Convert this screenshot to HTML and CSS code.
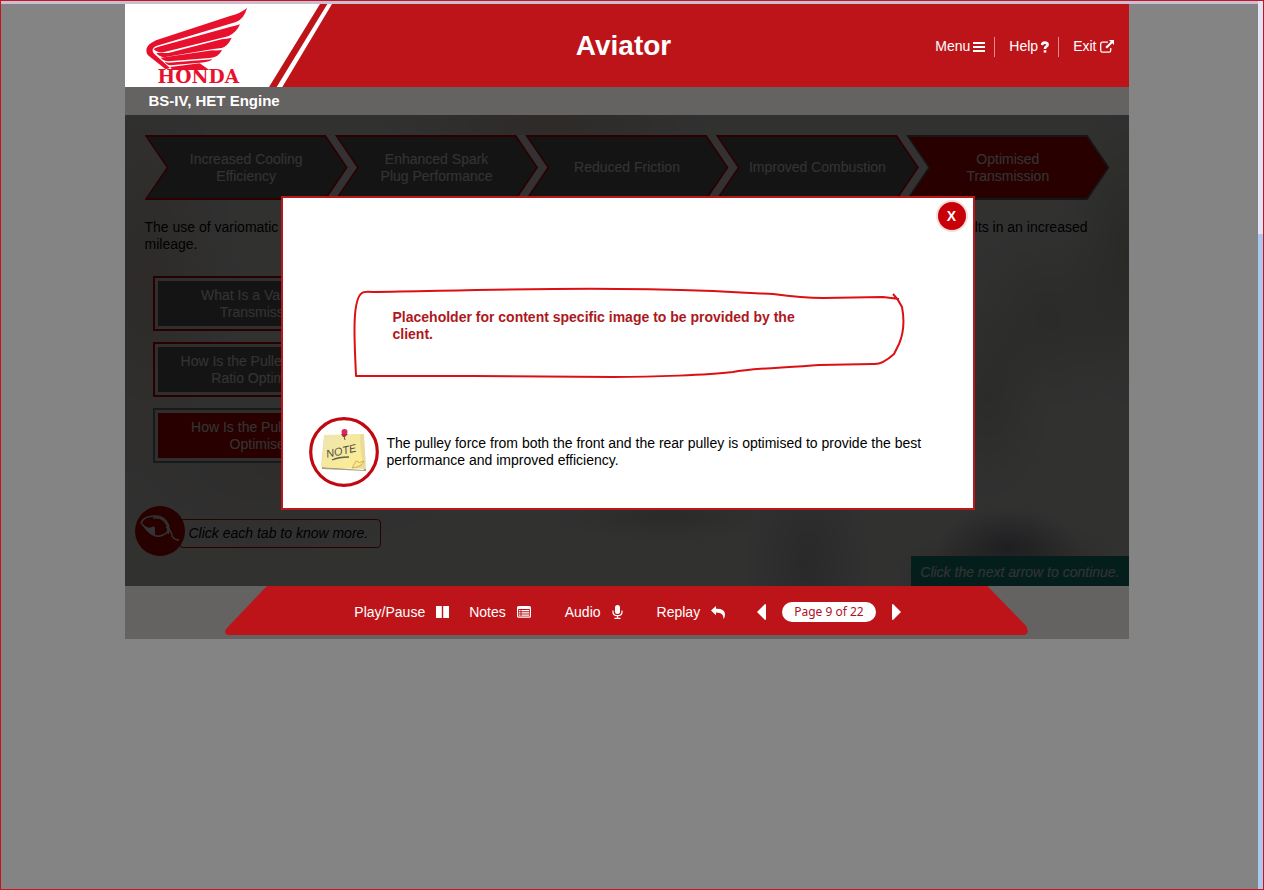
FILE: index.html
```html
<!DOCTYPE html>
<html lang="en">
<head>
<meta charset="utf-8">
<title>Aviator</title>
<link rel="stylesheet" href="styles.css">
</head>
<body>
<div class="frame">
  <main class="workspace">
    <div class="course">
      <header class="header">
        <a class="logo" href="#" aria-label="Honda home">
          <svg viewBox="15 12 630 249" width="210" height="83" aria-hidden="true">
            <path fill="#fff" d="M15 12H600L447 261H15ZM622 12H636L487 261H470Z"/>
            <g fill="#e8112d">
              <path d="M381 24Q372 57 348 66L111 137Q96 142 98 153Q99 158 104 163L150 204L137 208L84 166Q77 157 80 145Q84 132 108 121L330 48Q364 39 381 24Z"/>
              <path d="M360 73Q350 97 326 108Q316 112 306 113L130 157Q112 159 101 148Q107 142 124 138L332 80Q350 77 360 73Z"/>
              <path d="M335 113Q324 138 305 144L280 147L132 172Q118 170 109 159L145 159L305 118Q320 117 335 113Z"/>
              <path d="M306 150Q296 172 270 174L145 184Q130 183 122 173L277 151Q294 152 306 150Z"/>
              <path d="M278 178Q268 187 240 188L152 196Q139 194 134 185L145 188Z"/>
              <path d="M151 201L239 190L268 210H157Z"/>
            </g>
            <text class="wordmark" x="235" y="250" text-anchor="middle">HONDA</text>
          </svg>
        </a>
        <h1 class="title">Aviator</h1>
        <nav class="menu" aria-label="Course">
          <a href="#">Menu
            <svg viewBox="0 0 12 12" width="12" height="12" aria-hidden="true"><path fill="currentColor" d="M0 1h12v2H0zM0 5h12v2H0zM0 9h12v2H0z"/></svg></a>
          <a href="#">Help
            <svg viewBox="0 0 8 12" width="8" height="12" aria-hidden="true"><path fill="none" stroke="currentColor" stroke-width="2.6" d="M1 4Q1.300 1.600 3.800 1.600Q6.600 1.600 6.600 3.800Q6.600 5 5.200 5.700Q4 6.300 4 8"/><path fill="currentColor" d="M2.700 9.200h2.600v2.400H2.700z"/></svg></a>
          <a href="#">Exit
            <svg viewBox="0 0 14 13" width="14" height="13" aria-hidden="true"><path fill="none" stroke="currentColor" stroke-width="1.3" d="M8 2.200H2.400Q.7 2.200.7 4V10.500Q.7 12.200 2.400 12.200H9Q10.700 12.200 10.700 10.500V8"/><path fill="currentColor" d="M9 0h5v5l-1.700-1.700L7 8.600 5.400 7l5.300-5.300z"/></svg></a>
        </nav>
      </header>

      <h2 class="topic">BS-IV, HET Engine</h2>

      <section class="stage">
        <ol class="steps">
          <li><button type="button"><span>Increased Cooling<br>Efficiency</span></button></li>
          <li><button type="button"><span>Enhanced Spark<br>Plug Performance</span></button></li>
          <li><button type="button"><span>Reduced Friction</span></button></li>
          <li><button type="button"><span>Improved Combustion</span></button></li>
          <li><button type="button" class="current"><span>Optimised<br>Transmission</span></button></li>
        </ol>
        <p class="intro">
          <span class="intro-line"><span>The use of variomatic transmission</span> <span>results in an increased</span></span>
          mileage.
        </p>
        <div class="tabs">
          <button type="button">What Is a Variomatic<br>Transmission?</button>
          <button type="button">How Is the Pulley Diameter<br>Ratio Optimised?</button>
          <button type="button" class="current">How Is the Pulley Force<br>Optimised?</button>
        </div>
        <div class="hint">
          <span class="hint-icon">
            <svg viewBox="0 0 50 50" width="50" height="50" aria-hidden="true"><g fill="none" stroke="#fff" stroke-width="1.500"><path d="M6 18Q7 11 18 10Q29 9 33 18Q35 23 33 28"/><path d="M18 12Q28 10 32 19Q35 27 28 29Q20 33 12 24L7 18Q12 25 19 21"/><path d="M31 21Q37 25 37 30Q39 34 44 34"/></g><path fill="#fff" d="M6 17Q12 25 20 21L20 29Q13 27 6 17Z"/></svg>
          </span>
          <p class="hint-text">Click each tab to know more.</p>
        </div>
        <p class="next-prompt">Click the next arrow to continue.</p>

        <div class="overlay">
          <div class="dialog" role="dialog" aria-label="Pulley force">
            <button type="button" class="close" aria-label="Close">X</button>
            <div class="sketch">
              <svg viewBox="0 0 552 90" preserveAspectRatio="none" aria-hidden="true"><path fill="none" stroke="#dc1014" stroke-width="2" stroke-linejoin="round" d="M540 6L545 12L549 19Q553 40 546 56L541 66Q529 77 520 76L466 77C430 80 400 80 380 84C355 87 300 89 260 89L120 88L3 88C2 60-2 12 9 5Q11 3 20 4C90 3 190 0 265 1C350 1 390 5 420 6C450 10 460 10 470 10L530 9L546 11"/></svg>
              <p>Placeholder for content specific image to be provided by the client.</p>
            </div>
            <div class="note">
              <svg viewBox="0 0 70 70" width="70" height="70" aria-hidden="true">
                <defs><linearGradient id="paper" x2="1" y2="1"><stop offset="0" stop-color="#efe4b0"/><stop offset="1" stop-color="#fcee90"/></linearGradient></defs>
                <circle cx="35" cy="35" r="33.300" fill="#fff" stroke="#c00810" stroke-width="3.200"/>
                <path fill="#aaa06d" d="M13 50L54 53L57 51V54L13 52Z"/>
                <path fill="#eadc98" d="M15 19L55 17L57 52L12 50Z"/>
                <path fill="url(#paper)" d="M15 18L51 17Q51 35 54 45L44 51L12 50Q15 35 15 18Z"/>
                <path fill="#ffe783" stroke="#b79b48" stroke-width=".7" d="M43 51Q45 48 47 44Q50 47 55 44Q53 50 43 51Z"/>
                <path fill="none" stroke="#625e49" stroke-width="1.300" d="M23 43Q29 40 40 40"/>
                <circle cx="35.500" cy="15" r="3" fill="#d42c55"/><path fill="#bd204a" d="M32 17h7l-3 3h-2z"/><path stroke="#555" d="M35 19L36 23"/>
                <text class="note-word" x="32" y="38" text-anchor="middle" transform="rotate(-12 31 33)">NOTE</text>
              </svg>
              <p>The pulley force from both the front and the rear pulley is optimised to provide the best performance and improved efficiency.</p>
            </div>
          </div>
        </div>
      </section>

      <footer class="player">
        <svg class="player-shape" viewBox="0 0 804 49" preserveAspectRatio="none" aria-hidden="true"><path fill="#bd141a" d="M42 0H763L802 40Q806 49 799 49H5Q-2 49 1 43Z"/></svg>
        <div class="controls">
          <button type="button">Play/Pause
            <svg viewBox="0 0 13 12" width="13" height="12" aria-hidden="true"><path fill="currentColor" d="M0 0h5.800v12H0zM7.200 0H13v12H7.200z"/></svg></button>
          <button type="button" class="notes">Notes
            <svg viewBox="0 0 14 12" width="14" height="12" aria-hidden="true"><rect x=".6" y=".6" width="12.800" height="10.600" rx="1" fill="none" stroke="currentColor" stroke-width="1.200"/><path fill="currentColor" d="M1 1h12v2H1zM2 4h1.500v1.200H2zM4.500 4H12v1.200H4.500zM2 6.300h1.500v1.200H2zM4.500 6.300H12v1.200H4.500zM2 8.600h1.500v1.200H2zM4.500 8.600H12v1.200H4.500z"/></svg></button>
          <button type="button" class="spaced">Audio
            <svg viewBox="0 0 11 14" width="11" height="14" aria-hidden="true"><rect x="3" y="0" width="5" height="9" rx="2.500" fill="currentColor"/><path fill="none" stroke="currentColor" stroke-width="1.200" d="M1 5.500V7Q1 10.700 5.500 10.700T10 7V5.500M5.500 10.700V13M2.500 13.300H8.500"/></svg></button>
          <button type="button" class="spaced">Replay
            <svg viewBox="0 0 14 13" width="14" height="13" aria-hidden="true"><path fill="currentColor" d="M0 4.500L5 0V2.700Q14 2.400 14 8.500Q14 11 12.500 13Q12.800 6.500 5 6.600V9.200Z"/></svg></button>
          <div class="pager">
            <button type="button" aria-label="Previous page"><svg viewBox="0 0 9 16" width="9" height="16" aria-hidden="true"><path fill="currentColor" d="M8 0Q9 0 9 1V15Q9 16 8 16L0 8Z"/></svg></button>
            <span class="page-count">Page 9 of 22</span>
            <button type="button" aria-label="Next page"><svg viewBox="0 0 9 16" width="9" height="16" aria-hidden="true"><path fill="currentColor" d="M1 0Q0 0 0 1V15Q0 16 1 16L9 8Z"/></svg></button>
          </div>
        </div>
      </footer>
    </div>
  </main>
  <div class="scroll-track"></div>
</div>
</body>
</html>
```
FILE: styles.css
```css
* { box-sizing: border-box; }

body {
  margin: 0;
  font: 14px/17px "Liberation Sans", Arial, sans-serif;
  color: #000;
  background: #838483;
}

h1, h2, p, ol { margin: 0; padding: 0; }
button { font: inherit; color: inherit; border: 0; background: none; padding: 0; cursor: pointer; }
svg { display: block; flex: none; }

.frame {
  display: flex;
  min-height: 100vh;
  border: 1px solid #c8141e;
}

.workspace {
  flex: 1;
  min-width: 0;
  padding-right: 6px;
  border-top: 3px solid #c9bfd4;
}

.scroll-track {
  width: 5px;
  background: linear-gradient(#e4e4f8 233px, #a9c9f0 233px);
}

.course { max-width: 1004px; margin: 0 auto; }

/* Header */
.header {
  display: grid;
  grid-template-columns: 1fr auto 1fr;
  align-items: center;
  padding-right: 6px;
  background: #bd141a;
  color: #fff;
}

.wordmark { font: bold 56px "DejaVu Serif", serif; fill: #e8112d; }
.title { font-size: 28px; line-height: 32px; }

.menu { display: flex; justify-content: flex-end; padding: 2px 9px 0 0; }
.menu a {
  display: flex;
  align-items: center;
  gap: 3px;
  height: 20px;
  color: #fff;
  text-decoration: none;
}
.menu a + a { margin-left: 9px; padding-left: 14px; border-left: 1px solid #e58a8d; }

.topic {
  padding: 4px 24px;
  font-size: 15px;
  line-height: 20px;
  color: #fff;
  background: #656262;
}

/* Stage */
.stage {
  position: relative;
  display: flex;
  flex-direction: column;
  padding-top: 20px;
  background:
    radial-gradient(ellipse 90px 90px at 92% 43%, rgba(190, 200, 180, .6), transparent),
    radial-gradient(ellipse 70px 150px at 100% 30%, rgba(185, 195, 170, .7), transparent),
    radial-gradient(ellipse 60px 100px at 86% 60%, rgba(195, 205, 180, .6), transparent),
    radial-gradient(ellipse 70px 40px at 88% 92%, rgba(125, 130, 145, .8), transparent),
    radial-gradient(ellipse 60px 40px at 83% 98%, rgba(205, 180, 160, .7), transparent),
    radial-gradient(ellipse 60px 50px at 93% 98%, rgba(205, 185, 165, .7), transparent),
    radial-gradient(ellipse 60px 100px at 68% 95%, rgba(180, 180, 190, .6), transparent),
    radial-gradient(ellipse 110px 24px at 54% 85%, rgba(175, 190, 165, .5), transparent),
    radial-gradient(ellipse 160px 30px at 42% 2%, rgba(215, 190, 170, .6), transparent),
    radial-gradient(ellipse 90px 200px at 2% 35%, rgba(215, 195, 180, .6), transparent),
    radial-gradient(ellipse 200px 80px at 15% 75%, rgba(220, 212, 205, .6), transparent),
    #f4f2f1;
}

.steps { display: flex; list-style: none; margin: 0 19px 0 20px; }
.steps li { position: relative; flex: 1 1 0; }
.steps li:not(:last-child) { margin-right: -13px; }
.steps li:not(:last-child)::after {
  content: "";
  position: absolute;
  top: 0;
  bottom: 0;
  right: -8px;
  width: 30px;
  background: #fff4f2;
  clip-path: polygon(0 0, 8px 0, 100% 50%, 8px 100%, 0 100%, 22px 50%);
}
.steps button {
  position: relative;
  width: 100%;
  height: 65px;
  color: #fff;
  background: #d00008;
  clip-path: polygon(0 0, calc(100% - 22px) 0, 100% 50%, calc(100% - 22px) 100%, 0 100%, 22px 50%);
}
.steps button::before {
  content: "";
  position: absolute;
  inset: 2px;
  background: #646464;
  clip-path: polygon(1px 0, calc(100% - 21px) 0, 100% 50%, calc(100% - 21px) 100%, 1px 100%, 22px 50%);
}
.steps span { position: relative; }
.steps .current { background: #70686c; }
.steps .current::before { background: #c80000; }

.intro { margin: 19px 41px 0 20px; }
.intro-line { display: flex; justify-content: space-between; }

.tabs {
  display: flex;
  flex-direction: column;
  align-items: flex-start;
  gap: 11px;
  padding: 23px 28px 0;
}
.tabs button {
  width: 225px;
  height: 55px;
  padding: 3px;
  border: 2px solid #c0000c;
  color: #fff;
  background: #646464 content-box;
  box-shadow: inset 0 0 0 3px #f4e6e4;
}
.tabs .current { border-color: #787c80; background-color: #c80000; }

.hint { display: flex; align-items: center; padding: 43px 10px 0; }
.hint-icon { border-radius: 50%; background: #c40000; position: relative; }
.hint-text {
  margin: 4px 0 0 -6px;
  padding: 5px 12px 5px 9px;
  border: 1px solid #d00010;
  border-radius: 4px;
  font-style: italic;
}

.next-prompt {
  align-self: flex-end;
  padding: 8px 9px 5px;
  font-style: italic;
  color: #fff;
  background: #16988c;
}

/* Dialog */
.overlay {
  position: absolute;
  inset: 0;
  display: grid;
  justify-items: center;
  align-items: start;
  padding: 81px 20px 0 22px;
  background: rgba(0, 0, 0, .8);
}
.dialog {
  display: flex;
  flex-direction: column;
  width: 100%;
  max-width: 694px;
  padding: 2px 5px 21px 26px;
  border: 2px solid #b8181c;
  background: #fff;
}
.close {
  align-self: flex-end;
  width: 32px;
  height: 32px;
  border: 2px solid #f3dede;
  border-radius: 50%;
  font-weight: bold;
  color: #fff;
  background: #c80008;
}
.sketch {
  position: relative;
  height: 90px;
  margin: 56px 63px 0 44px;
  padding: 21px 80px 0 40px;
  font-weight: bold;
  color: #ad1820;
}
.sketch svg { position: absolute; inset: 0; width: 100%; height: 100%; overflow: visible; }
.note { display: flex; align-items: center; gap: 8px; margin-top: 39px; padding-right: 24px; }
.note-word { font: italic 11px "Liberation Sans", Arial, sans-serif; fill: #555140; }

/* Player bar */
.player {
  position: relative;
  padding: 16px 20px 17px;
  color: #fff;
  background: #656262;
}
.player-shape { position: absolute; top: 0; left: 10%; width: 80%; height: 49px; }
.controls { position: relative; display: flex; align-items: center; justify-content: center; padding-left: 2px; }
.controls button { display: flex; align-items: center; gap: 11px; }
.notes { margin-left: 20px; }
.spaced { margin-left: 34px; }
.pager { display: flex; align-items: center; gap: 16px; margin-left: 32px; }
.page-count {
  padding: 0 12px;
  border-radius: 10px;
  font: 12px/20px "Noto Sans", sans-serif;
  color: #b01028;
  background: #fff;
}
```
